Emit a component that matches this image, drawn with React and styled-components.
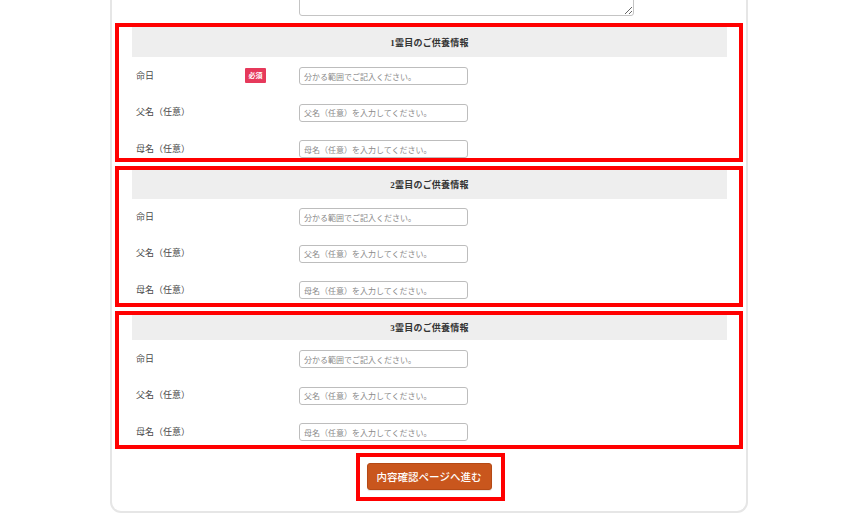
import React from "react";
import styled, { createGlobalStyle } from "styled-components";

const Global = createGlobalStyle`
  html, body { margin: 0; padding: 0; background: #fff; }
  body { font-family: "Liberation Serif", "Noto Sans CJK JP", serif; }
`;

const Page = styled.div`
  width: 868px;
  height: 527px;
  overflow: hidden;
`;

const Card = styled.div`
  margin: -40px 0 0 110px;
  width: 638px;
  box-sizing: border-box;
  border: 2px solid #e6e6e6;
  border-top: none;
  border-radius: 0 0 11px 11px;
  padding: 0 0 10px;
`;

const TextareaRow = styled.div`
  padding-left: 187px;
  height: 56px;
`;

const Textarea = styled.textarea`
  display: block;
  width: 335px;
  height: 56px;
  box-sizing: border-box;
  border: 1px solid #c4c4c4;
  border-radius: 3px;
  margin: 0;
`;

const Section = styled.section`
  margin: ${(p) => p.$mt}px 3px 0;
  border: 4px solid #ff0000;
  padding-bottom: ${(p) => p.$pb}px;
`;

const Header = styled.div`
  margin: 0 12px 0 13px;
  height: ${(p) => p.$h}px;
  background: #eeeeee;
  display: flex;
  align-items: center;
  justify-content: center;
  font-family: "Liberation Serif", "Noto Sans CJK JP", serif;
  font-weight: 700;
  font-size: 9px;
  color: #333;
  letter-spacing: 0.2px;
`;

const Rows = styled.div`
  display: flex;
  flex-direction: column;
  gap: 18.5px;
  padding-top: ${(p) => p.$pt}px;
`;

const Row = styled.div`
  display: grid;
  grid-template-columns: 109px 54px 169px;
  align-items: center;
  padding-left: 17px;
  height: 18px;
`;

const Label = styled.div`
  font-family: "Liberation Serif", "Noto Sans CJK JP", serif;
  font-size: 9px;
  color: #4a4a4a;
  transform: translateY(-1px);
`;

const Badge = styled.span`
  justify-self: start;
  width: 21px;
  height: 15px;
  background: #e6395b;
  color: #fff;
  font-family: "Noto Sans CJK JP", sans-serif;
  font-weight: 700;
  font-size: 7px;
  display: flex;
  align-items: center;
  justify-content: center;
  border-radius: 1px;
  transform: translateY(-1px);
`;

const Input = styled.input`
  width: 169px;
  height: 18px;
  box-sizing: border-box;
  border: 1px solid #bdbdbd;
  border-radius: 3px;
  padding: 0 4px;
  margin: 0;
  font-family: "Noto Sans CJK JP", sans-serif;
  font-size: 8px;
  &::placeholder { color: #8a8a8a; }
`;

const ButtonWrap = styled.div`
  display: flex;
  justify-content: center;
  margin-top: 4px;
`;

const ButtonFrame = styled.div`
  border: 4px solid #ff0000;
  padding: 6px 9px 7px 7px;
  margin-left: 2px;
`;

const Button = styled.button`
  width: 125px;
  height: 27px;
  background: #c9561d;
  border: 1px solid #b54a16;
  border-radius: 3px;
  color: #fff;
  font-family: "Noto Sans CJK JP", sans-serif;
  font-size: 10.5px;
  font-weight: 500;
  padding: 0;
  display: flex;
  align-items: center;
  justify-content: center;
  box-shadow: 0 1px 1px rgba(0,0,0,0.1);
`;

const sections = [
  { n: 1, mt: 7, h: 30, pt: 10, pb: 0, required: true },
  { n: 2, mt: 4, h: 29, pt: 9, pb: 4, required: false },
  { n: 3, mt: 4, h: 25, pt: 10, pb: 4, required: false },
];

export default function App() {
  return (
    <Page>
      <Global />
      <Card>
        <TextareaRow>
          <Textarea />
        </TextareaRow>
        {sections.map((s) => (
          <Section key={s.n} $mt={s.mt} $pb={s.pb}>
            <Header $h={s.h}>{s.n}霊目のご供養情報</Header>
            <Rows $pt={s.pt}>
              <Row>
                <Label>命日</Label>
                {s.required ? <Badge>必須</Badge> : <span />}
                <Input placeholder="分かる範囲でご記入ください。" />
              </Row>
              <Row>
                <Label>父名（任意）</Label>
                <span />
                <Input placeholder="父名（任意）を入力してください。" />
              </Row>
              <Row>
                <Label>母名（任意）</Label>
                <span />
                <Input placeholder="母名（任意）を入力してください。" />
              </Row>
            </Rows>
          </Section>
        ))}
        <ButtonWrap>
          <ButtonFrame>
            <Button>内容確認ページへ進む</Button>
          </ButtonFrame>
        </ButtonWrap>
      </Card>
    </Page>
  );
}
